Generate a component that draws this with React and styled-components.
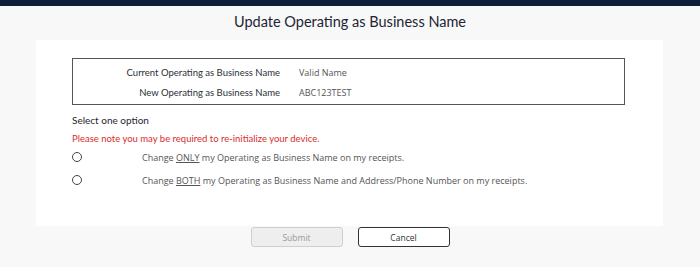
import styled, { createGlobalStyle } from "styled-components";

const GlobalStyle = createGlobalStyle`
    body {
        margin: 0;
        background: #f8f8f8;
        font-family: Lato, "Noto Sans", sans-serif;
    }
`;

export default function App() {
    const options = [
        { id: "only", word: "ONLY", rest: "my Operating as Business Name on my receipts." },
        { id: "both", word: "BOTH", rest: "my Operating as Business Name and Address/Phone Number on my receipts." },
    ];

    return (
        <>
            <GlobalStyle />
            <TopBar />
            <Title>Update Operating as Business Name</Title>

            <Card>
                <InfoBox>
                    <Label>Current Operating as Business Name</Label>
                    <Value>Valid Name</Value>
                    <Label>New Operating as Business Name</Label>
                    <Value>ABC123TEST</Value>
                </InfoBox>

                <Heading>Select one option</Heading>
                <Note>Please note you may be required to re-initialize your device.</Note>

                <Options>
                    {options.map((o) => (
                        <Option key={o.id}>
                            <RadioCell>
                                <Radio type="radio" name="change" />
                            </RadioCell>
                            <OptionText>
                                Change <u>{o.word}</u> {o.rest}
                            </OptionText>
                        </Option>
                    ))}
                </Options>
            </Card>

            <Buttons>
                <Button disabled>Submit</Button>
                <Button $outline>Cancel</Button>
            </Buttons>
        </>
    );
}

const TopBar = styled.div`
    height: 6px;
    background: #0b1f38;
`;

const Title = styled.h1`
    margin: 0;
    height: 34px;
    line-height: 31px;
    text-align: center;
    font-size: 14.5px;
    font-weight: 400;
    color: #1c2533;
`;

const Card = styled.div`
    margin: 0 37px 0 36px;
    height: 186px;
    box-sizing: border-box;
    background: #fff;
    padding: 18px 38px 0 36px;
`;

const InfoBox = styled.div`
    display: grid;
    grid-template-columns: 207px 1fr;
    column-gap: 19px;
    height: 47px;
    box-sizing: border-box;
    border: 1px solid #555;
    padding-top: 5px;
    font-size: 9.5px;
    line-height: 18px;
`;

const Label = styled.div`
    text-align: right;
    color: #2a2f38;
`;

const Value = styled.div`
    font-family: "Open Sans", sans-serif;
    font-size: 9px;
    color: #555;
`;

const Heading = styled.div`
    margin-top: 7px;
    font-size: 10px;
    line-height: 16px;
    color: #1c2533;
`;

const Note = styled.div`
    margin-top: 3px;
    font-size: 9.5px;
    line-height: 16px;
    color: #d92c2c;
`;

const Options = styled.div`
    display: flex;
    flex-direction: column;
    gap: 7px;
    margin-top: 2px;
`;

const Option = styled.label`
    display: flex;
    align-items: center;
    height: 16px;
`;

const RadioCell = styled.div`
    width: 70px;
    display: flex;
`;

const Radio = styled.input`
    appearance: none;
    margin: 0;
    width: 10px;
    height: 10px;
    border: 1px solid #444;
    border-radius: 50%;
    background: #fff;
`;

const OptionText = styled.span`
    font-family: "Open Sans", sans-serif;
    font-size: 9px;
    color: #555;

    u {
        text-underline-offset: 1px;
    }
`;

const Buttons = styled.div`
    display: flex;
    justify-content: center;
    gap: 15px;
    padding-top: 1px;
`;

const Button = styled.button`
    width: 92px;
    height: 20px;
    box-sizing: border-box;
    border-radius: 3px;
    font-family: "Open Sans", sans-serif;
    font-size: 8.5px;
    background: ${(p) => (p.$outline ? "#fff" : "#eeeeee")};
    border: 1px solid ${(p) => (p.$outline ? "#333" : "#cfcfcf")};
    color: ${(p) => (p.$outline ? "#333" : "#999")};
    cursor: pointer;
`;
